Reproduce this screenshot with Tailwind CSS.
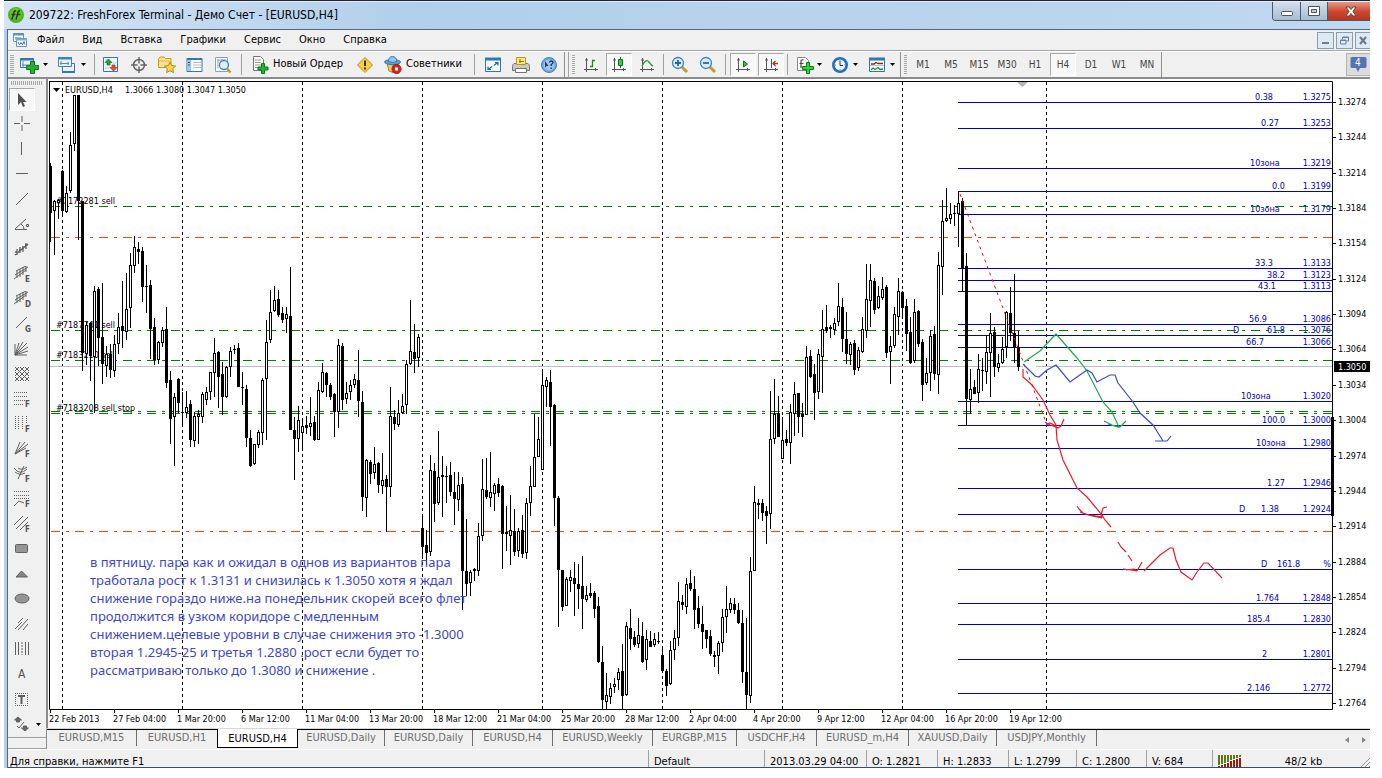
<!DOCTYPE html>
<html lang="ru">
  <head>
    <meta charset="utf-8" />
    <title>209722: FreshForex Terminal</title>
    <meta name="viewport" content="width=device-width, initial-scale=1" />
    <script src="https://cdn.jsdelivr.net/npm/@tailwindcss/browser@4"></script>
  </head>
  <body class="bg-white pl-1 pr-3 font-['DejaVu_Sans_Condensed','DejaVu_Sans',sans-serif] text-black">
    <div class="border-t border-[#23232d] bg-[#b1cfeb]">
      <!-- title bar -->
      <header class="flex h-7 items-start justify-between bg-linear-to-r from-[#d3e4f5] via-[#b1cfeb] via-30% to-[#c0d8f0] border-t border-white/60">
        <div class="flex items-center gap-[5px] pl-1 pt-[3px]">
          <svg class="size-4" viewBox="0 0 16 16">
            <circle cx="8" cy="8" r="8" fill="#4fb41c" />
            <circle cx="8" cy="7" r="6" fill="#7ed321" opacity=".6" />
            <path d="M4 12.500 6 5q.5-1.500 2-1M3.500 7.500h4M8 12.500 10 5q.5-1.500 2-1M8.500 7.500h4" fill="none" stroke="#1d3a12" stroke-width="1.500" />
          </svg>
          <h1 class="text-[12px] leading-5 whitespace-nowrap">209722: FreshForex Terminal - Демо Счет - [EURUSD,H4]</h1>
        </div>
        <div class="flex h-[19px] overflow-hidden rounded-bl border-b border-l border-[#4d5a6b]">
          <button aria-label="Свернуть" class="flex w-[28px] items-center justify-center border-r border-[#4d5a6b] bg-linear-to-b from-[#d3dfec] to-[#a9bccf]">
            <svg viewBox="0 0 14 12" width="14" height="12"><rect x="1.500" y="6.500" width="11" height="4" rx="1" fill="#fff" stroke="#4a5360" /></svg>
          </button>
          <button aria-label="Развернуть" class="flex w-[27px] items-center justify-center border-r border-[#4d5a6b] bg-linear-to-b from-[#d3dfec] to-[#a9bccf]">
            <svg viewBox="0 0 12 10" width="12" height="10"><path d="M.5.500h11v9H.5zM3.500 3.500h5v3h-5z" fill="#fff" fill-rule="evenodd" stroke="#4a5360" /></svg>
          </button>
          <button aria-label="Закрыть" class="flex w-[42px] items-center justify-center bg-linear-to-b from-[#e39a88] via-[#cf4a33] to-[#b8341d] pl-1">
            <svg viewBox="0 0 12 11" width="12" height="11"><path d="M1 1h3l2 2.500L8 1h3L8 5.500l3 4.500H8L6 7.500 4 10H1l3-4.500z" fill="#fff" stroke="#5a4a4a" /></svg>
          </button>
        </div>
      </header>

      <div class="ml-[3px] border-l border-t border-[#5b6670] bg-[#f0f0f0]">
        <!-- menu -->
        <nav class="flex h-[21px] items-center justify-between border-b border-[#a5a5a5] text-[11px]">
          <div class="flex items-center">
            <svg class="ml-1 mr-[9px]" width="16" height="16" viewBox="0 0 16 16">
              <path d="M1.500 1.500h10v8h-10z" fill="#fff" stroke="#5b92c9" /><path d="M1 2.500h11" stroke="#5b92c9" stroke-width="2" />
              <path d="M3 6h6M4 5v3" stroke="#5b92c9" />
              <path d="M4.500 6.500h10v8h-10z" fill="#fff" stroke="#5b92c9" /><path d="M4 7.500h11" stroke="#79aade" stroke-width="2" />
              <path d="m6 10 1.500 3L9 10.500l1.500 2.500L12 9.500l1 3" fill="none" stroke="#3c78b4" />
            </svg>
            <div class="flex gap-[18px]">
              <button>Файл</button><button>Вид</button><button>Вставка</button><button>Графики</button><button>Сервис</button><button>Окно</button><button>Справка</button>
            </div>
          </div>
          <div class="flex gap-0.5 overflow-hidden">
            <button aria-label="Свернуть график" class="flex size-[17px] items-center justify-center border border-[#8c9cab] bg-[#dceaf6]"><svg width="9" height="9"><path d="M1 7h7" stroke="#6d7f92" stroke-width="2" /></svg></button>
            <button aria-label="Восстановить график" class="flex size-[17px] items-center justify-center border border-[#8c9cab] bg-[#dceaf6]"><svg width="9" height="9"><path d="M2.500 3V1h6v4H6.500M.5 4h5.500v4H.5zM2 1.500h7M.5 4.500H6" fill="none" stroke="#6d7f92" /></svg></button>
            <button aria-label="Закрыть график" class="flex h-[17px] w-[15px] items-center justify-center border border-r-0 border-[#8c9cab] bg-[#dceaf6]"><svg width="9" height="9"><path d="m1 1 6 7M7 1 1 8" stroke="#66788a" stroke-width="2" /></svg></button>
          </div>
        </nav>

        <!-- toolbar -->
        <div class="flex h-[28px] items-center justify-between border-b-2 border-[#8c8c8c] border-t border-t-white text-[11px] text-black">
          <div class="flex h-full items-center">
            <i class="mx-[2px] h-5 w-1 bg-[repeating-linear-gradient(#a8a8a8_0_1px,#f0f0f0_1px_2px)]"></i>
            <button aria-label="Новый график" class="flex w-[38px] items-center gap-1 pl-[3px]">
              <svg width="20" height="18" viewBox="0 0 20 18"><path d="M1.500 2.500h13v9h-13z" fill="#eaf3fc" stroke="#2f77b5" /><path d="M1 3.500h14" stroke="#2f77b5" stroke-width="2" /><path d="M4 5v6M3 9h8" stroke="#5d87ad" /><path d="M11.500 5.500h4v4h4v4h-4v4h-4v-4h-4v-4h4z" fill="#22b32e" stroke="#0d7a18" /></svg>
              <svg width="5" height="3"><path d="M0 0h5L2.500 3z" /></svg>
            </button>
            <button aria-label="Профили" class="flex w-[38px] items-center gap-1 pl-[3px]">
              <svg width="20" height="18" viewBox="0 0 20 18"><path d="M5.500 7.500h12v8h-12z" fill="#eaf3fc" stroke="#2f77b5" /><path d="M5 16h13" stroke="#2f77b5" stroke-width="2" /><path d="M1.500 1.500h13v9h-13z" fill="#eaf3fc" stroke="#3c82c0" /><path d="M1 2.500h14" stroke="#3c82c0" stroke-width="2" /><path d="M4 5v4M3 7.500h9M11 6v3" stroke="#5d87ad" /></svg>
              <svg width="5" height="3"><path d="M0 0h5L2.500 3z" /></svg>
            </button>
            <i class="mx-[2px] h-[21px] w-px bg-[#a0a0a0]"></i>
            <button aria-label="Обзор рынка" class="flex w-7 justify-center"><svg width="18" height="18" viewBox="0 0 18 18"><path d="M1.500 1.500h14v14h-14z" fill="#f2f8ff" stroke="#2f77b5" /><path d="M3 4h3M3 12h4M11 7h3" stroke="#a7c6e6" /><path d="m6.500 3 3.500 3.500H8V9H5V6.500H3z" fill="#27a332" stroke="#12761c" stroke-width=".7" /><path d="m11.500 15-3.500-3.500h2V9h3v2.500h2z" fill="#e5552c" stroke="#a33512" stroke-width=".7" /></svg></button>
            <button aria-label="Окно данных" class="flex w-7 justify-center"><svg width="18" height="18" viewBox="0 0 18 18" fill="none" stroke="#666" stroke-width="1.500"><circle cx="9" cy="9" r="5.500" /><path d="M9 1v6.500M9 10.500V17M1 9h6.500M10.500 9H17" /></svg></button>
            <button aria-label="Навигатор" class="flex w-7 justify-center"><svg width="20" height="18" viewBox="0 0 20 18"><path d="M1.500 2.500 3 1h4l1.500 1.500H14v9H1.500z" fill="#fbe28b" stroke="#c79a2a" /><path d="M2 5h12" stroke="#e0b84c" /><path d="m13 6 1.700 3.600 4 .4-3 2.700.9 4-3.600-2-3.500 2 .8-4-3-2.700 4-.4z" fill="#ffd54a" stroke="#b88718" /></svg></button>
            <button aria-label="Терминал" class="flex w-7 justify-center"><svg width="18" height="16" viewBox="0 0 18 16"><path d="M1 1.500h15v13H1z" fill="#fff" stroke="#2f77b5" /><path d="M1 2h15" stroke="#2f77b5" stroke-width="2" /><path d="M2 3h3v11H2z" fill="#9cc7ee" /><path d="M7 5.500h8M7 8h8M7 10.500h8" stroke="#b8b8b8" /><path d="M2 5.500h2M2 8h2" stroke="#1c5a96" /></svg></button>
            <button aria-label="Тестер стратегий" class="flex w-7 justify-center"><svg width="18" height="18" viewBox="0 0 18 18"><path d="M1.500 1.500h12v14h-12z" fill="#fff" stroke="#7aa5cc" /><path d="M3 4h9M4 3v9M8 3v4" stroke="#8aa" /><circle cx="10" cy="9" r="4.500" fill="#d7ebfb" fill-opacity=".8" stroke="#4386c3" stroke-width="1.300" /><path d="m13 12.500 3.500 4" stroke="#c89b28" stroke-width="2.500" /></svg></button>
            <i class="mx-[4px] h-[21px] w-px bg-[#a0a0a0]"></i>
            <button class="flex w-[105px] items-center gap-1 whitespace-nowrap pl-[5px]">
              <svg class="shrink-0" width="18" height="18" viewBox="0 0 18 18"><path d="M2.500.500h7l3 3v11h-10z" fill="#fff" stroke="#777" /><path d="M4 4h6M4 6.500h6M4 9h6M4 11.500h3" stroke="#999" /><path d="M10.500 7.500h3v3.500H17v3h-3.500v3.500h-3V14H7v-3h3.500z" fill="#22b32e" stroke="#0d7a18" /></svg>Новый Ордер
            </button>
            <button aria-label="Метаэдитор" class="flex w-7 justify-center"><svg width="18" height="18" viewBox="0 0 18 18"><path d="m9 1.500 7.500 7.500L9 16.500 1.500 9z" fill="#fccf3f" stroke="#b98c16" stroke-linejoin="round" /><path d="M9 4.500v5.500M9 11.500v2" stroke="#3a2f10" stroke-width="2" /></svg></button>
            <button class="flex w-[91px] items-center gap-1 whitespace-nowrap pl-[5px]">
              <svg class="shrink-0" width="18" height="18" viewBox="0 0 18 18"><path d="M3 7q6 4 12 0l-2 8q-4 3-8 0z" fill="#f3c95d" stroke="#ab7c1e" /><ellipse cx="8.500" cy="6" rx="8" ry="2.500" fill="#5ba5dd" stroke="#2f77b5" /><path d="M4 5.500q1-5 4.500-5T13 5.500q-4 2-9 0z" fill="#8cc6ef" stroke="#2f77b5" /><circle cx="12.500" cy="13" r="4.500" fill="#d9271b" stroke="#a4140b" /><path d="M11 11.500h3v3h-3z" fill="#fff" /></svg>Советники
            </button>
            <i class="mx-[4px] h-[21px] w-px bg-[#a0a0a0]"></i>
            <button aria-label="Полный экран" class="flex w-7 justify-center"><svg width="18" height="16" viewBox="0 0 18 16"><path d="M1.500 1.500h15v13h-15z" fill="#f4f9fe" stroke="#2f77b5" /><path d="M1 2h16" stroke="#2f77b5" stroke-width="3" /><path d="M10 8.500 13.500 5.500M8 9.500 4.500 12.500M11 5.500h3v3M4 9.500v3h3" fill="none" stroke="#2468a6" stroke-width="1.200" /></svg></button>
            <button aria-label="Печать" class="flex w-7 justify-center"><svg width="18" height="18" viewBox="0 0 18 18"><path d="M2 7.500h14q1.500 1 1.500 3v4H.5v-4q0-2 1.500-3z" fill="#c9c9c9" stroke="#757575" /><path d="M4.500 1.500h9v7h-9z" fill="#fce779" stroke="#b8962a" /><path d="M7 5.500h5M8 3v4" stroke="#8a7420" /><path d="M3.500 12.500h11v4h-11z" fill="#fff" stroke="#757575" /></svg></button>
            <button aria-label="Справка" class="flex w-7 justify-center"><svg width="18" height="18" viewBox="0 0 18 18"><circle cx="9" cy="9" r="7.500" fill="#6ea6dc" stroke="#4883bd" /><circle cx="9" cy="9" r="5.500" fill="#9cc6ee" /><path d="M5 5v6.500L6.500 10h2z" fill="#17406d" /><path d="M9.500 6.500Q9.800 5 11.200 5T13 6.500Q13 7.500 11.200 8.500V10M11.200 11.500V13" fill="none" stroke="#17406d" stroke-width="1.400" /></svg></button>
            <i class="mr-[3px] ml-[1px] h-full w-px bg-[#8f8f8f]"></i><i class="h-full w-px bg-[#a0a0a0]"></i>
            <i class="ml-[3px] mr-[2px] h-5 w-[3px] bg-[repeating-linear-gradient(#a8a8a8_0_1px,#f0f0f0_1px_2px)]"></i>
            <button aria-label="Бары" class="flex w-7 justify-center"><svg width="16" height="16" viewBox="0 0 16 16" fill="none" stroke="#555"><path d="M3.500 1v14M1 12.500h14M2 3h3M12.500 11v3" /><path d="M9.500 3v7M9 3.500h3M7 9.500h3" stroke="#1a8a1f" stroke-width="1.300" /></svg></button>
            <button aria-label="Свечи" aria-pressed="true" class="mx-[1px] flex h-[23px] w-[26px] items-center justify-center border border-[#a8a8a8] border-b-white border-r-white bg-[#f8f8f8]"><svg width="16" height="16" viewBox="0 0 16 16" fill="none" stroke="#555"><path d="M3.500 1v14M1 12.500h14M2 3h3M12.500 11v3" /><path d="M9.500 0v11" stroke="#0d7a18" /><path d="M7.500 2.500h4v6h-4z" fill="#2fd13c" stroke="#0d7a18" /></svg></button>
            <button aria-label="Линия" class="flex w-7 justify-center"><svg width="16" height="16" viewBox="0 0 16 16" fill="none" stroke="#555"><path d="M3.500 1v14M1 12.500h14M2 3h3M12.500 11v3" /><path d="M3 9q4-8 7-4t4 4" stroke="#2a9a30" stroke-width="1.300" /></svg></button>
            <i class="mx-[2px] h-[21px] w-px bg-[#a0a0a0]"></i>
            <button aria-label="Увеличить" class="flex w-7 justify-center"><svg width="18" height="18" viewBox="0 0 18 18"><path d="m10.500 10.500 5.500 5.500" stroke="#c89b28" stroke-width="3" /><circle cx="7" cy="7" r="5.500" fill="#d7ebfb" stroke="#3b82c4" stroke-width="1.300" /><path d="M7 4v6M4 7h6" stroke="#2369a8" stroke-width="1.800" /></svg></button>
            <button aria-label="Уменьшить" class="flex w-7 justify-center"><svg width="18" height="18" viewBox="0 0 18 18"><path d="m10.500 10.500 5.500 5.500" stroke="#c89b28" stroke-width="3" /><circle cx="7" cy="7" r="5.500" fill="#d7ebfb" stroke="#3b82c4" stroke-width="1.300" /><path d="M4 7h6" stroke="#2369a8" stroke-width="1.800" /></svg></button>
            <i class="mx-[3px] h-[21px] w-px bg-[#a0a0a0]"></i>
            <button aria-label="Автопрокрутка" aria-pressed="true" class="mx-[1px] flex h-[23px] w-[26px] items-center justify-center border border-[#a8a8a8] border-b-white border-r-white bg-[#f8f8f8]"><svg width="16" height="16" viewBox="0 0 16 16" fill="none" stroke="#555"><path d="M3.500 1v14M1 12.500h14M2 3h3M12.500 11v3" /><path d="m8.500 4 4 3-4 3z" fill="#35c63f" stroke="#0d7a18" /></svg></button>
            <button aria-label="Сдвиг графика" aria-pressed="true" class="mx-[1px] flex h-[23px] w-[26px] items-center justify-center border border-[#a8a8a8] border-b-white border-r-white bg-[#f8f8f8]"><svg width="16" height="16" viewBox="0 0 16 16" fill="none" stroke="#555"><path d="M3.500 1v14M1 12.500h14M2 3h3M12.500 11v3" /><path d="M8.500 2v9" stroke="#1c5a96" /><path d="M15 6.500h-5M12.500 4 10 6.500 12.500 9" stroke="#b8341d" stroke-width="1.300" /></svg></button>
            <i class="mx-[2px] h-[21px] w-px bg-[#a0a0a0]"></i>
            <button aria-label="Индикаторы" class="flex w-[36px] items-center gap-0.5 pl-[5px]"><svg width="20" height="18" viewBox="0 0 20 18"><path d="M2.500 1.500h8l3 3v10h-11z" fill="#fff" stroke="#888" /><path d="M6 12V5q0-1.500 2.500-1M4.500 7.500h4" fill="none" stroke="#444" stroke-width="1.200" /><path d="M11.500 6.500h3v4h4v3h-4v4h-3v-4h-4v-3h4z" fill="#2bd638" stroke="#0d7a18" /></svg><svg width="5" height="3"><path d="M0 0h5L2.500 3z" /></svg></button>
            <button aria-label="Периоды" class="flex w-[37px] items-center gap-1 pl-[5px]"><svg width="18" height="18" viewBox="0 0 18 18"><circle cx="9" cy="9" r="6.700" fill="#f0f7ff" stroke="#1f6fc4" stroke-width="2.600" /><path d="M9 5v4.500h3" fill="none" stroke="#234" /><path d="M9 4v1M9 13v1M4 9h1M13 9h1" stroke="#789" /></svg><svg width="5" height="3"><path d="M0 0h5L2.500 3z" /></svg></button>
            <button aria-label="Шаблоны" class="flex w-[37px] items-center gap-1 pl-[5px]"><svg width="18" height="16" viewBox="0 0 18 16"><path d="M1.500 1.500h15v13h-15z" fill="#fff" stroke="#2f77b5" /><path d="M1 2h16" stroke="#2f77b5" stroke-width="3" /><path d="M3 7h3l2-1.500 2 1h5" fill="none" stroke="#8c2d14" stroke-width="1.300" /><path d="M2 8.500h14" stroke="#a9c8e6" /><path d="m3 13 2-2 2 1.500 3-2 2 2 3-.5" fill="none" stroke="#1f8f2a" stroke-width="1.300" /></svg><svg width="5" height="3"><path d="M0 0h5L2.500 3z" /></svg></button>
            <i class="h-full w-px bg-[#8f8f8f]"></i>
            <i class="ml-[3px] mr-[2px] h-5 w-[3px] bg-[repeating-linear-gradient(#a8a8a8_0_1px,#f0f0f0_1px_2px)]"></i>
            <div class="flex h-full items-center text-[10px] text-[#444]">
              <button class="w-7">M1</button><button class="w-7">M5</button><button class="w-7">M15</button><button class="w-7">M30</button><button class="w-7">H1</button>
              <button aria-pressed="true" class="mx-[1px] h-[23px] w-[26px] border border-[#a8a8a8] border-b-white border-r-white bg-[#f8f8f8]">H4</button>
              <button class="w-7">D1</button><button class="w-7">W1</button><button class="w-7">MN</button>
            </div>
            <i class="h-full w-px bg-[#8f8f8f]"></i>
          </div>
          <button aria-label="Сообщения" class="flex h-[23px] w-6 items-center justify-center border border-r-0 border-[#b4b4b4] bg-[#dcdcdc]">
            <svg width="18" height="17" viewBox="0 0 18 17"><path d="M2 1h13q1.500 0 1.500 1.500v8q0 1.500-1.500 1.500h-5l-2 4-2-4H2Q.5 12 .5 10.500v-8Q.5 1 2 1z" fill="#5575b0" /><text x="5" y="10" font-size="10" fill="#fff">4</text></svg>
          </button>
        </div>

        <div class="flex">
          <!-- drawing tools -->
          <aside class="flex w-[38px] shrink-0 flex-col">
            <div id="tools" class="flex flex-col border-b border-[#a0a0a0]">
              <i class="mx-[3px] my-[2px] h-1 w-8 bg-[repeating-linear-gradient(90deg,#a8a8a8_0_1px,#f0f0f0_1px_2px)]"></i>
              <button aria-label="Курсор" aria-pressed="true" class="my-[1px] ml-[1px] flex h-[23px] w-[26px] items-center justify-center border border-[#a8a8a8] border-b-white border-r-white bg-[#f8f8f8]"><svg width="10" height="16" viewBox="0 0 10 16"><path d="M1 1v12l3-3 2 5 2-1-2-4h3.500z" fill="#505050" /></svg></button>
            </div>
            <div class="flex-1 border-b border-[#a0a0a0]"></div>
          </aside>

          <div class="flex min-w-0 flex-1 flex-col">
            <!-- chart -->
            <main class="border-l-2 border-[#8c8c8c] bg-white">
              <svg id="chart" class="block h-auto w-full font-['DejaVu_Sans_Condensed','DejaVu_Sans',sans-serif] text-[9px]" viewBox="48 79 1322 649">
                <g id="periods" stroke="#000" stroke-dasharray="3 3" shape-rendering="crispEdges"></g>
                <g>
                  <text x="56" y="204">#7172281 sell</text>
                  <text x="56" y="328">#7187741 sell</text>
                  <text x="56" y="358">#7183210 sell</text>
                  <text x="56" y="411">#7183208 sell stop</text>
                </g>
                <path d="M50 366.500h973M1036 366.500h296" stroke="#c0c0c0" />
                <g id="fib" fill="#0000c8" shape-rendering="crispEdges"></g>
                <g fill="none" stroke-dasharray="9 6 3 6" shape-rendering="crispEdges">
                  <path d="M51 206.500h1281M51 330.500h1281M51 360.500h1281M51 411.500h1281M51 413.500h1281" stroke="#008000" />
                  <path d="M51 237.500h1281M51 531.500h1281" stroke="#ff4500" />
                </g>
                <g id="candles" shape-rendering="crispEdges"></g>
                <path d="M960 194 1047 425" stroke="#ff0000" stroke-dasharray="3 4" />

                <!-- hand-drawn forecast -->
                <g fill="none" stroke="#ed1c24" stroke-width="1.200">
                  <path d="M1023 369v8l9 8 11 15 7 15 6 10 1 15 6 20 9 18 5 10 10 9 15 18 3 5 6 7" />
                  <path d="M1045 422l5 3 6 2 2 1 3-2 3-7M1046 425l4-2 6 3" />
                  <path d="M1077 506l2 3 4 4 9 3 10 2-14-3-8-3M1091 515l11 2-1-2 2-7 4-1" />
                  <path d="M1118 542l3 5 5 5M1128 555l4 6M1123 569l8 1 6 1-3-2-8 1M1137 571l5-9" />
                  <path d="M1144 571l16-16 10-7h3l3 12 5 12 11 8 5-8 7-9h4l14 15" />
                </g>
                <g fill="none" stroke="#22a84c" stroke-width="1.200">
                  <path d="M1024 362l16-11 16-17 21 24 10 13 16 31 9 10 7 15" />
                  <path d="M1104 421l8 4 8 2 6-6M1108 424l10 3 5-2" />
                </g>
                <path d="M1023 364l12 12 4 1 8-7 9-5 14 17 17-12 5 3 5 9 13-7h5l3 8 15 19 7 11 13 12 10 16M1155 441h12l4-5" fill="none" stroke="#3f48cc" stroke-width="1.200" />

                <!-- frame -->
                <path d="M49.500 81v628.500h1283V81.500H49" fill="none" stroke="#000" />
                <path d="M1332.500 417v99" stroke="#000" stroke-width="3" />
                <path d="M1017 82h11l-5.500 5z" fill="#b4b4b4" />
                <path d="M53 88h7l-3.500 4z" />
                <text x="65" y="93">EURUSD,H4</text>
                <text x="125" y="93">1.3066 1.3080 1.3047 1.3050</text>
                <g id="scale"></g>
                <path d="M1334 361h36v11h-36z" />
                <text x="1338" y="370" fill="#fff">1.3050</text>

                <g class="font-['Noto_Sans','Open_Sans',sans-serif] text-[13px]" fill="#3f48cc">
                  <text x="90" y="567">в пятницу. пара как и ожидал в однов из вариантов пара</text>
                  <text x="90" y="585">тработала рост к 1.3131 и снизилась к 1.3050 хотя я ждал</text>
                  <text x="90" y="603">снижение гораздо ниже.на понедельник скорей всего флет</text>
                  <text x="90" y="621">продолжится в узком коридоре с медленным</text>
                  <text x="90" y="639">снижением.целевые уровни в случае снижения это -1.3000</text>
                  <text x="90" y="657">вторая 1.2945-25 и третья 1.2880 .рост если будет то</text>
                  <text x="90" y="675">рассматриваю только до 1.3080 и снижение .</text>
                </g>
              </svg>
            </main>

            <!-- chart tabs -->
            <div class="flex h-[21px] justify-between border-l border-t border-l-[#8c8c8c] border-t-[#d8d8d8] text-[11px] text-[#6e6e6e]">
              <div class="flex h-5 flex-1 items-start justify-between border-t border-black">
                <div class="flex h-[18px] items-start leading-4 whitespace-nowrap">
                  <button class="w-[90px] border-r border-[#6e6e6e]">EURUSD,M15</button>
                  <button class="w-[80px]">EURUSD,H1</button>
                  <button class="-mt-px h-[19px] w-[81px] border border-t-0 border-black bg-white pt-px text-black">EURUSD,H4</button>
                  <button class="w-[87px] border-r border-[#6e6e6e]">EURUSD,Daily</button>
                  <button class="w-[88px] border-r border-[#6e6e6e]">EURUSD,Daily</button>
                  <button class="w-[80px] border-r border-[#6e6e6e]">EURUSD,H4</button>
                  <button class="w-[100px] border-r border-[#6e6e6e]">EURUSD,Weekly</button>
                  <button class="w-[84px] border-r border-[#6e6e6e]">EURGBP,M15</button>
                  <button class="w-[80px] border-r border-[#6e6e6e]">USDCHF,H4</button>
                  <button class="w-[92px] border-r border-[#6e6e6e]">EURUSD_m,H4</button>
                  <button class="w-[88px] border-r border-[#6e6e6e]">XAUUSD,Daily</button>
                  <button class="w-[100px] border-r border-[#6e6e6e]">USDJPY,Monthly</button>
                </div>
                <div class="flex h-full items-center gap-[13px] pr-1">
                  <button aria-label="Назад"><svg width="4" height="6"><path d="M4 0v6L0 3z" fill="#888" /></svg></button>
                  <button aria-label="Вперёд"><svg width="4" height="6"><path d="M0 0v6l4-3z" fill="#888" /></svg></button>
                </div>
              </div>
            </div>
          </div>
        </div>

        <!-- status bar -->
        <footer class="flex h-[19px] overflow-hidden border-b border-t border-b-[#3f4d5c] border-t-white text-[11px] leading-6 whitespace-nowrap">
          <span class="flex-1 pl-[2px]">Для справки, нажмите F1</span>
          <span class="w-[116px] border-l border-[#a0a0a0] pl-[5px]">Default</span>
          <span class="w-[102px] border-l border-[#a0a0a0] pl-[5px]">2013.03.29 04:00</span>
          <span class="w-[71px] border-l border-[#a0a0a0] pl-[5px]">O: 1.2821</span>
          <span class="w-[71px] border-l border-[#a0a0a0] pl-[5px]">H: 1.2833</span>
          <span class="w-[68px] border-l border-[#a0a0a0] pl-[5px]">L: 1.2799</span>
          <span class="w-[70px] border-l border-[#a0a0a0] pl-[5px]">C: 1.2800</span>
          <span class="w-[66px] border-l border-[#a0a0a0] pl-[5px]">V: 684</span>
          <span class="flex w-[158px] border-l border-[#a0a0a0] pl-[5px]">
            <svg class="mt-[5px]" width="24" height="12" viewBox="0 0 24 12"><path d="M0 0h2v10H0zM3 0h2v9H3zM6 0h2v8H6zM9 0h2v7H9zM12 0h2v5h-2zM15 0h2v4h-2zM18 0h2v3h-2zM21 0h2v2h-2z" fill="#5b7a10" /><path d="M0 11h2v1H0zM3 10h2v2H3zM6 9h2v3H6zM9 8h2v4H9zM12 6h2v6h-2zM15 5h2v7h-2zM18 4h2v8h-2zM21 3h2v9h-2z" fill="#9a1a0c" /></svg>
            <span class="flex-1 pl-1 text-center">48/2 kb</span>
            <svg class="mt-[8px]" width="9" height="9"><path d="M0 9 9 0M4 9l5-5M8 9l1-1" stroke="#999" /></svg>
          </span>
        </footer>
      </div>
    </div>

    <script>
      // remaining line studies in the side toolbar: [label, svg body]
      var F = '<text x="11" y="16" font-size="8" font-weight="bold" stroke="none" fill="#555">';
      var studies = [
        ["Перекрестие", '<path d="M8 0v6M8 9v6M0 7.500h6M10 7.500h6"/>'],
        ["Вертикальная линия", '<path d="M7.500 1v13"/>'],
        ["Горизонтальная линия", '<path d="M2 7.500h12"/>'],
        ["Трендовая линия", '<path d="M2 14 14 2"/>'],
        ["Линия по углу", '<path d="M1 13.500h12M1 13 12 3M7 8q3 2 3 5M12.500 8.500h2v2h-2z"/>'],
        ["Регрессия", '<path d="M1 14 14 3M3 8v6M6 6v6M9 5v6M12 2v6M1 11h2M5 9h2M8 7h2M11 4h3" stroke-width="1.300"/>'],
        ["Равноудалённый канал", '<path d="M0 13 12 4M2 5 12 0M1 9 14 1M3 5v7M6 3v8M9 1v8M12 0v6"/>' + F + "E</text>"],
        ["Канал отклонений", '<path d="M0 13 12 4M2 5 12 0M1 9 14 1M3 5v7M6 3v8M9 1v8M12 0v6"/>' + F + "D</text>"],
        ["Линия Ганна", '<path d="M2 12 13 1"/>' + F + "G</text>"],
        ["Веер Ганна", '<path d="M1 14V3M1 14 5 2M1 14 9 1M1 14 13 2M1 14 14 6M1 14 14 10M1 14h12"/>'],
        ["Сетка Ганна", '<path d="M1 1l14 14M6 1l9 9M11 1l4 4M1 6l9 9M1 11l4 4M15 1 1 15M10 1 1 10M5 1 1 5M15 6l-9 9M15 11l-4 4"/>'],
        ["Фибоначчи", '<path d="M0 1.500h14M0 5.500h14M0 9.500h14M0 13.500h9" stroke-dasharray="1 1"/>' + F + "F</text>"],
        ["Временные зоны", '<path d="M1.500 0v14M4.500 0v14M8.500 0v14M12.500 0v8" stroke-dasharray="1 1"/>' + F + "F</text>"],
        ["Веер Фибоначчи", '<path d="M1 13 6 1M1 13 11 1M1 13 14 3M1 13 12 7"/>' + F + "F</text>"],
        ["Дуги Фибоначчи", '<path d="M4 13 10 0M0 2q6 8 13 1M1 6q5 4 10 1M4 2q4 3 9-1"/>' + F + "F</text>"],
        ["Расширение", '<path d="M0 .5h15M0 4.500h15M0 7.500h15" stroke-dasharray="1 1"/><path d="M0 15 5 10l5 2"/>' + F + "F</text>"],
        ["Канал Фибоначчи", '<path d="M0 9 9 0M2 13 14 1M6 14 14 6"/>' + F + "F</text>"],
        ["Прямоугольник", '<rect x="1.500" y="3.500" width="12" height="8" rx="1" fill="#959595"/>'],
        ["Треугольник", '<path d="m2 11 5.500-6 6 6z" fill="#858585"/>'],
        ["Эллипс", '<ellipse cx="8" cy="7.500" rx="7" ry="4.500" fill="#959595"/>'],
        ["Вилы", '<path d="M1 13 8 6M4 14 14 3M9 14l5-6M4 7l5-5"/>'],
        ["Циклические линии", '<path d="M1.500 1v13M4.500 1v13M11.500 1v13M14.500 1v13"/><path d="M8 1v13" stroke-dasharray="2 1"/>'],
        ["Текст", '<text x="4" y="12" font-size="12" stroke="none" fill="#555">A</text>'],
        ["Текстовая метка", '<path d="M1.500 2v12.500h12V2.500h-12" stroke-dasharray="1 1"/><path d="M4 5h7M7.500 5v8" stroke-width="2"/>'],
        ["Стрелки", '<path d="m4 1 3.500 3H5.500v2h-3V4H.500zM11 15l-3.500-3h2v-2h3v2h2z" fill="#666"/><path d="m3 10 2 2 5-6"/>'],
      ];
      document.getElementById("tools").insertAdjacentHTML("beforeend", studies.map(function (s, i) {
        var arrow = i == studies.length - 1 ? '<svg width="5" height="3" class="mr-[5px]"><path d="M0 0h5L2.500 3z"/></svg>' : "";
        return '<button aria-label="' + s[0] + '" class="flex h-[25px] items-center justify-between pl-[6px]"><svg width="18" height="17" viewBox="0 0 18 17" fill="none" stroke="#606060">' + s[1] + "</svg>" + arrow + "</button>";
      }).join(""));

      // one bar every 4px from x=50: high, low, body top, body bottom, bearish
      var bars = "163,242,166,213,1 200,255,201,211,0 199,219,200,203,0 170,215,171,211,1 186,213,193,212,0 132,193,145,191,0 95,151,95,144,0 95,240,95,201,1 201,371,201,353,1 322,365,325,354,0 322,381,323,356,1 286,413,291,357,0 287,366,289,338,1 283,384,337,364,1 346,377,354,366,0 344,378,354,370,1 335,377,344,371,0 313,354,327,344,0 281,348,326,331,1 273,340,309,332,0 253,328,265,308,0 236,273,247,266,0 242,264,249,252,1 247,302,251,287,1 265,313,286,287,1 280,359,285,329,1 318,365,327,360,1 341,364,342,360,0 327,347,330,343,0 307,388,329,383,1 371,444,380,419,1 393,466,397,417,0 378,413,379,403,1 392,425,412,413,1 391,418,407,413,0 400,447,404,440,1 412,447,416,441,0 410,444,414,417,0 392,423,394,417,0 387,405,392,400,0 372,400,372,392,0 338,397,353,373,0 351,408,352,377,1 362,415,374,397,1 366,398,367,397,0 347,377,351,367,0 345,354,349,350,1 343,387,348,387,1 372,405,387,388,1 385,447,389,438,1 430,467,438,466,1 444,465,444,464,0 430,448,432,445,0 378,445,380,433,0 320,440,342,379,0 290,343,312,340,0 286,312,300,311,0 290,317,299,315,1 307,323,313,320,1 307,333,314,319,0 267,430,316,430,1 417,480,430,439,1 406,452,420,439,0 420,450,426,433,0 416,434,425,428,1 397,436,423,427,0 416,441,422,440,1 382,440,390,440,0 363,393,372,392,0 372,397,373,385,1 383,400,385,397,1 393,437,394,412,1 339,428,345,412,0 343,410,346,400,1 382,404,393,399,0 380,400,385,392,0 374,388,379,385,0 350,417,380,401,1 391,511,402,497,1 459,517,460,498,0 460,484,462,474,1 447,479,464,473,0 462,493,463,485,1 453,494,480,486,0 475,532,479,487,1 387,497,416,487,0 410,430,417,424,1 400,427,413,425,0 394,414,406,413,0 360,414,364,405,0 300,365,351,364,0 324,373,352,359,1 334,367,337,358,0 517,557,528,547,1 530,565,545,553,1 455,556,470,552,0 463,522,471,504,1 431,505,477,503,0 456,517,475,477,1 466,503,476,477,1 462,496,475,492,1 472,525,492,499,1 472,511,485,500,0 477,610,484,571,1 519,596,571,584,1 570,596,572,583,0 568,581,569,571,0 523,576,536,571,0 459,541,489,536,0 458,499,490,497,1 452,507,492,498,0 483,511,485,494,0 478,497,484,493,1 485,569,486,534,1 506,551,532,534,1 495,565,530,536,0 509,556,531,552,1 528,557,531,551,0 515,558,530,554,1 498,559,503,553,0 466,516,486,503,0 414,487,457,487,0 417,457,439,457,0 369,470,385,470,0 377,407,380,387,0 370,446,382,407,1 404,526,405,498,1 496,627,498,570,1 570,611,570,607,1 577,606,579,606,0 570,592,577,581,0 562,616,578,584,1 564,609,584,589,1 556,629,586,599,1 586,602,595,600,0 583,598,593,596,1 591,618,593,609,1 597,663,606,662,1 646,709,662,700,1 673,709,695,702,0 683,704,688,697,0 678,693,684,687,0 668,690,672,680,0 644,709,671,696,1 622,696,626,695,0 609,650,628,639,1 631,647,637,645,1 618,648,635,644,0 622,663,636,662,1 630,670,639,660,0 631,647,641,647,1 633,647,639,645,0 632,644,641,642,1 646,671,655,671,1 669,696,671,686,1 641,685,650,684,0 630,660,638,650,0 582,646,601,638,0 595,610,602,605,1 578,614,584,607,0 570,591,583,589,1 576,629,589,610,1 596,628,608,624,1 606,649,624,632,1 630,648,630,639,1 630,656,636,654,1 651,667,655,657,1 641,674,643,656,0 609,652,617,643,0 586,633,609,617,0 598,613,603,610,0 598,614,604,610,1 603,624,610,623,1 610,683,623,672,1 618,709,672,695,1 557,703,571,696,0 486,571,502,571,0 499,519,503,505,1 499,521,503,513,1 506,544,511,516,1 391,529,439,514,0 379,444,414,439,0 396,437,413,437,1 417,459,440,459,0 430,446,439,443,1 404,464,412,443,0 382,436,394,414,0 393,433,393,417,1 403,437,414,417,1 346,415,357,415,0 350,378,356,377,1 364,420,374,393,1 349,399,354,392,0 310,393,329,357,0 305,333,327,331,1 325,338,327,329,0 318,335,323,330,0 283,326,306,322,0 298,352,307,339,1 312,364,339,354,1 342,365,344,355,0 340,375,343,370,1 347,371,350,368,0 317,353,329,352,0 264,338,299,331,0 264,327,280,301,0 278,314,281,310,1 286,309,296,308,0 277,300,289,298,0 285,358,287,353,1 336,384,346,352,0 307,348,314,346,0 278,335,291,317,0 291,318,292,308,1 299,351,306,334,1 317,364,332,363,1 299,363,312,361,0 310,347,311,344,1 339,401,342,385,1 358,385,373,383,0 330,391,336,373,0 326,380,334,374,1 252,394,265,375,0 200,295,221,267,0 188,222,218,221,0 203,224,214,219,0 205,226,213,214,1 191,247,203,214,0 198,291,201,268,1 253,425,266,399,1 369,414,389,400,0 380,394,387,394,1 354,403,369,393,0 358,391,370,371,1 336,384,352,372,0 313,397,333,353,0 327,377,332,367,1 354,372,363,368,0 337,364,349,363,0 311,358,312,347,0 287,341,313,333,1 274,363,333,347,1 331,371,347,367,1";
      document.getElementById("candles").innerHTML = bars.split(" ").map(function (bar, i) {
        var b = bar.split(",").map(Number), x = 50 + i * 4;
        var s = '<rect x="' + x + '" y="' + b[0] + '" width="1" height="' + (b[1] - b[0]) + '"/>';
        s += '<rect x="' + (x - 1) + '" y="' + b[2] + '" width="3" height="' + Math.max(1, b[3] - b[2]) + '"/>';
        if (!b[4] && b[3] - b[2] > 2) s += '<rect x="' + x + '" y="' + (b[2] + 1) + '" width="1" height="' + (b[3] - b[2] - 2) + '" fill="#fff"/>';
        return s;
      }).join("");

      // day separators
      document.getElementById("periods").innerHTML = [62, 182, 302, 422, 542, 662, 782, 902, 1046].map(function (x) {
        return '<path d="M' + x + '.5 82v627"/>';
      }).join("");

      // fibo levels: y, price, then x/label pairs
      var levels = [
        [102, "1.3275", 1255, "0.38"], [128, "1.3253", 1261, "0.27"], [168, "1.3219", 1250, "10зона"], [191, "1.3199", 1272, "0.0"],
        [214, "1.3179", 1250, "10зона"], [268, "1.3133", 1255, "33.3"], [280, "1.3123", 1267, "38.2"], [291, "1.3113", 1258, "43.1"],
        [324, "1.3086", 1249, "56.9"], [335, "1.3076", 1233, "D", 1267, "61.8"], [347, "1.3066", 1246, "66.7"], [401, "1.3020", 1241, "10зона"],
        [425, "1.3000", 1262, "100.0"], [448, "1.2980", 1256, "10зона"], [488, "1.2946", 1267, "1.27"], [514, "1.2924", 1239, "D", 1261, "1.38"],
        [569, "%", 1261, "D", 1277, "161.8"], [603, "1.2848", 1256, "1.764"], [624, "1.2830", 1247, "185.4"], [659, "1.2801", 1262, "2"], [693, "1.2772", 1247, "2.146"],
      ];
      document.getElementById("fib").innerHTML = levels.map(function (l) {
        var s = '<rect x="958" y="' + l[0] + '" width="374" height="1"/><text x="1331" y="' + (l[0] - 2) + '" text-anchor="end">' + l[1] + "</text>";
        for (var i = 2; i < l.length; i += 2) s += '<text x="' + l[i] + '" y="' + (l[0] - 2) + '">' + l[i + 1] + "</text>";
        return s;
      }).join("");

      // price and time scales
      var out = "";
      for (var p = 0; p < 18; p++) {
        var y = Math.round(102 + p * 35.35);
        out += '<rect x="1333" y="' + y + '" width="3" height="1"/><text x="1338" y="' + (y + 3) + '">' + (1.3274 - p * 0.003).toFixed(4) + "</text>";
      }
      ["22 Feb 2013", "27 Feb 04:00", "1 Mar 20:00", "6 Mar 12:00", "11 Mar 04:00", "13 Mar 20:00", "18 Mar 12:00", "21 Mar 04:00", "25 Mar 20:00", "28 Mar 12:00", "2 Apr 04:00", "4 Apr 20:00", "9 Apr 12:00", "12 Apr 04:00", "16 Apr 20:00", "19 Apr 12:00"].forEach(function (d, i) {
        out += '<rect x="' + (50 + i * 64) + '" y="709" width="1" height="4"/><text x="' + (49 + i * 64) + '" y="722">' + d + "</text>";
      });
      document.getElementById("scale").innerHTML = out;
    </script>
  </body>
</html>
